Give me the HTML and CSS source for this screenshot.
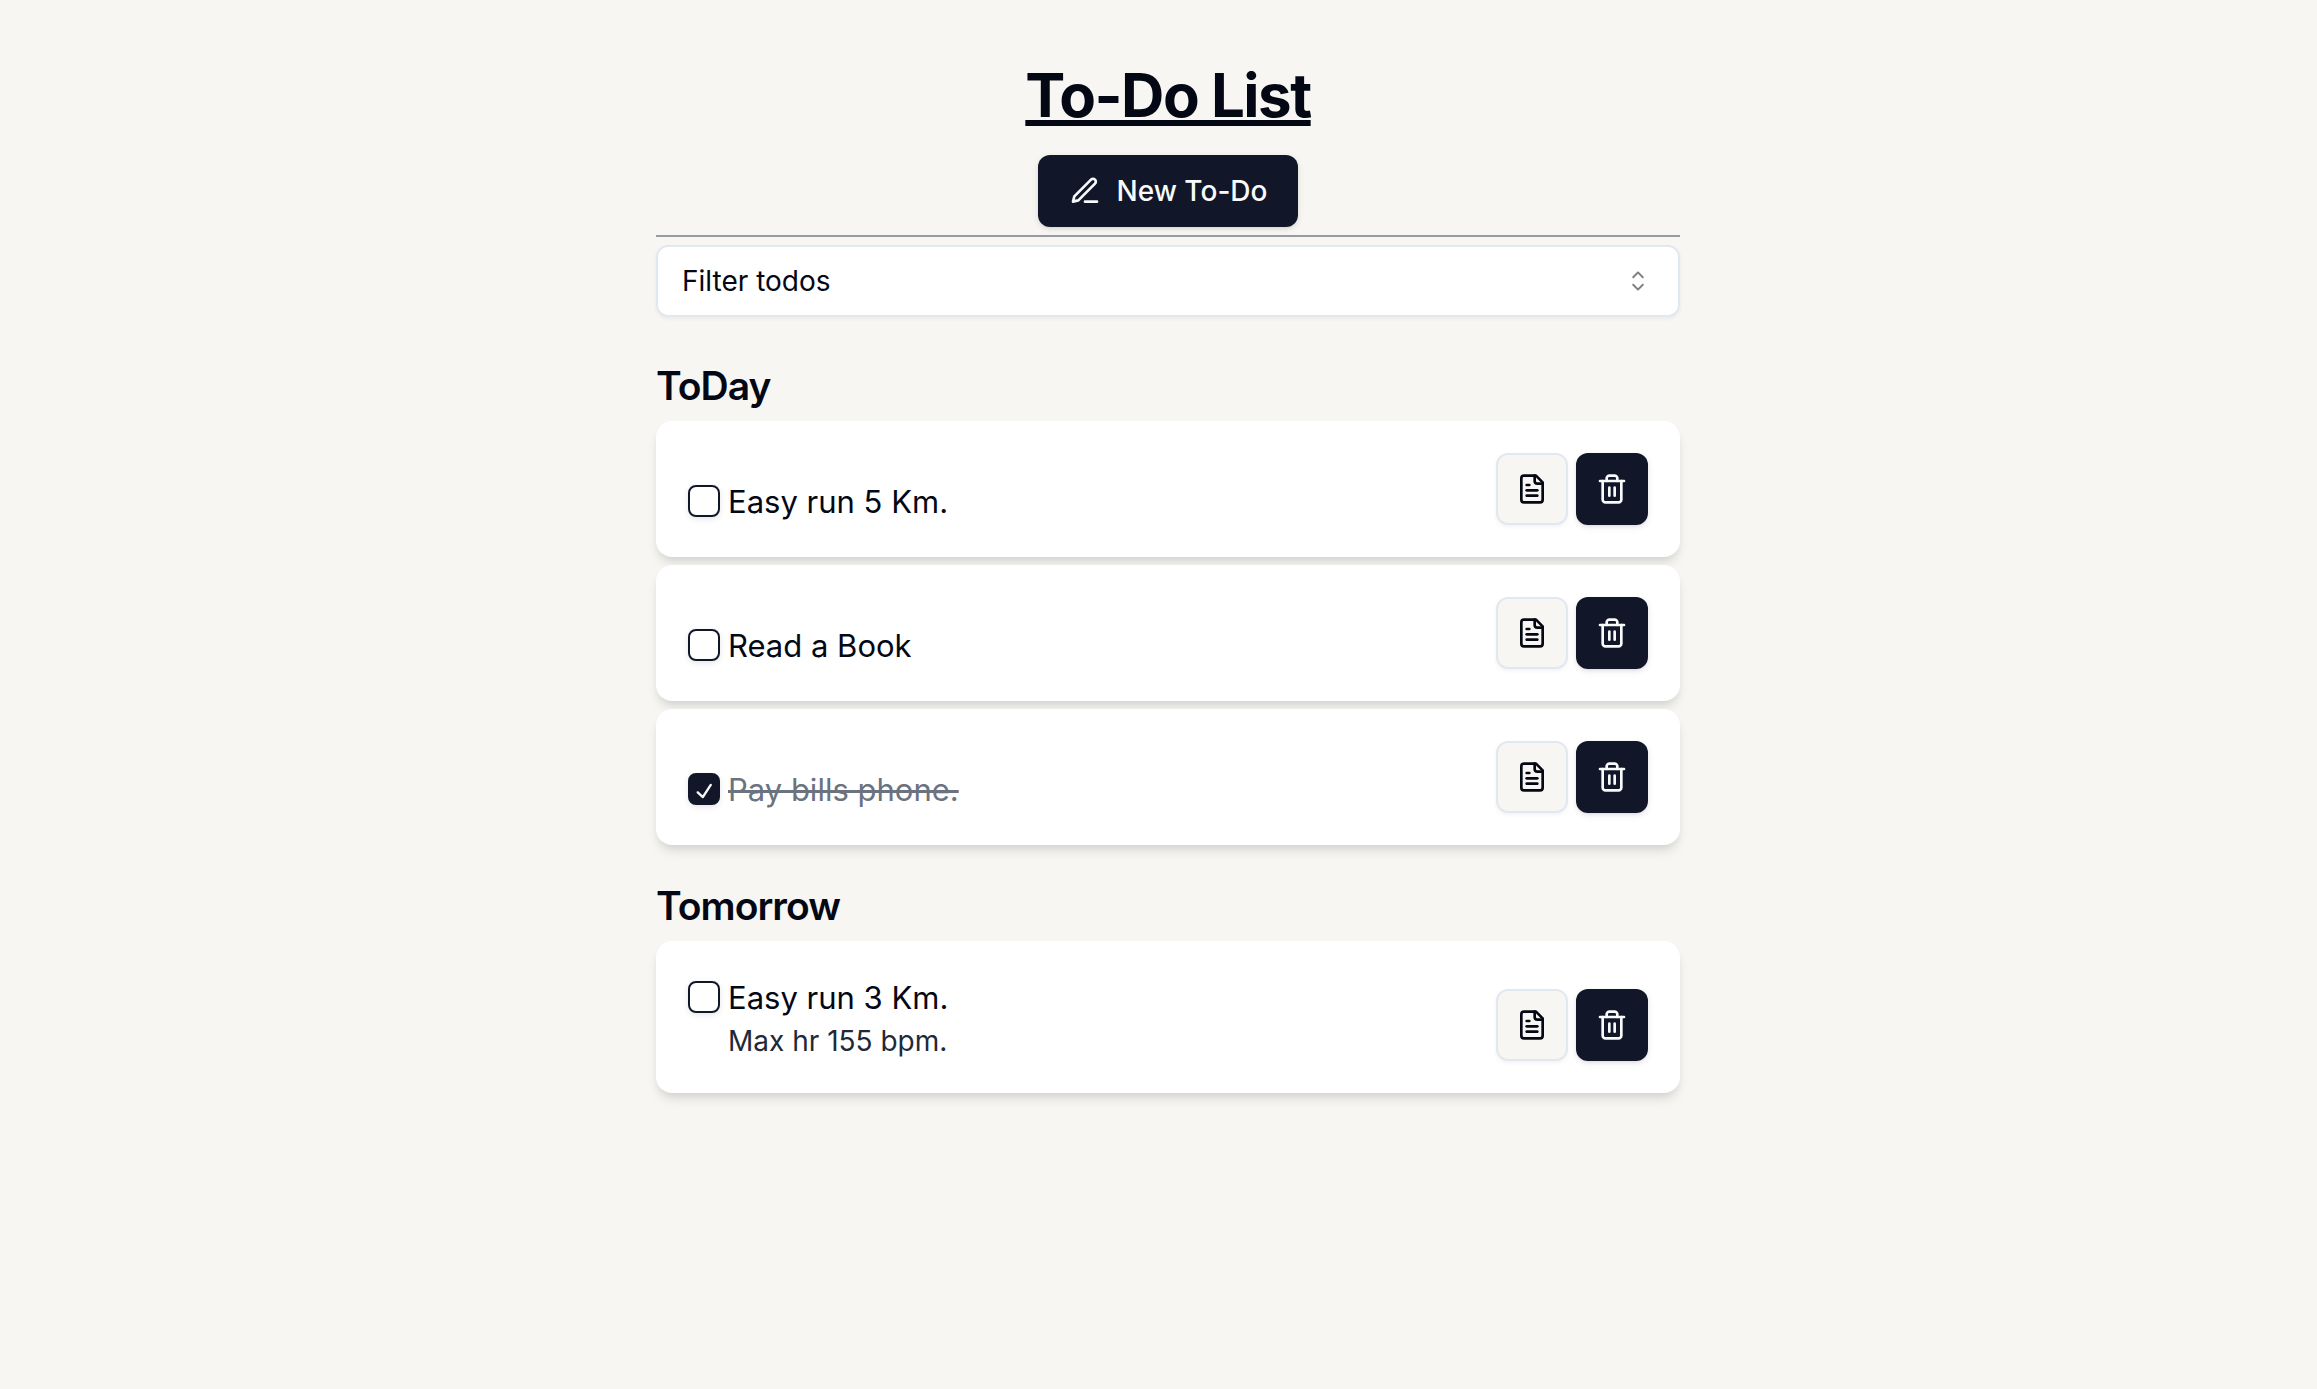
FILE: index.html
```html
<!DOCTYPE html>
<html lang="en">
<head>
  <meta charset="utf-8">
  <meta name="viewport" content="width=device-width, initial-scale=1">
  <title>To-Do List</title>
  <link rel="stylesheet" href="styles.css">
</head>
<body>
  <svg width="0" height="0" class="sprite" aria-hidden="true">
    <symbol id="icon-pen" viewBox="0 0 24 24">
      <path d="M12 20h9"/>
      <path d="M16.5 3.5a2.12 2.12 0 0 1 3 3L7 19l-4 1 1-4Z"/>
    </symbol>
    <symbol id="icon-note" viewBox="0 0 24 24">
      <path d="M15 2H6a2 2 0 0 0-2 2v16a2 2 0 0 0 2 2h12a2 2 0 0 0 2-2V7Z"/>
      <path d="M14 2v4a2 2 0 0 0 2 2h4"/>
      <path d="M10 9H8"/>
      <path d="M16 13H8"/>
      <path d="M16 17H8"/>
    </symbol>
    <symbol id="icon-trash" viewBox="0 0 24 24">
      <path d="M3 6h18"/>
      <path d="M19 6v14c0 1-1 2-2 2H7c-1 0-2-1-2-2V6"/>
      <path d="M8 6V4c0-1 1-2 2-2h4c1 0 2 1 2 2v2"/>
      <path d="M10 11v6"/>
      <path d="M14 11v6"/>
    </symbol>
  </svg>

  <main class="app">
    <header class="header">
      <h1 class="title">To-Do List</h1>
      <button type="button" class="button button-new">
        <svg class="icon" aria-hidden="true"><use href="#icon-pen"/></svg>
        New To-Do
      </button>
    </header>
    <hr class="divider">

    <div class="filter">
      <select class="filter-select" aria-label="Filter todos">
        <option>Filter todos</option>
        <option>Done</option>
        <option>Pending</option>
      </select>
      <svg class="filter-caret" viewBox="0 0 15 15" aria-hidden="true">
        <path d="M4.93179 5.43179C4.75605 5.60753 4.75605 5.89245 4.93179 6.06819C5.10753 6.24392 5.39245 6.24392 5.56819 6.06819L7.49999 4.13638L9.43179 6.06819C9.60753 6.24392 9.89245 6.24392 10.0682 6.06819C10.2439 5.89245 10.2439 5.60753 10.0682 5.43179L7.81819 3.18179C7.73379 3.0974 7.61933 3.04999 7.49999 3.04999C7.38064 3.04999 7.26618 3.0974 7.18179 3.18179L4.93179 5.43179ZM4.93179 9.56819L7.18179 11.8182C7.35753 11.9939 7.64245 11.9939 7.81819 11.8182L10.0682 9.56819C10.2439 9.39245 10.2439 9.10753 10.0682 8.93179C9.89245 8.75606 9.60753 8.75606 9.43179 8.93179L7.49999 10.8636L5.56819 8.93179C5.39245 8.75606 5.10753 8.75606 4.93179 8.93179C4.75605 9.10753 4.75605 9.39245 4.93179 9.56819Z"/>
      </svg>
    </div>

    <section class="group">
      <h2 class="group-title">ToDay</h2>
      <ul class="list">
        <li class="card">
          <div class="todo">
            <input type="checkbox" class="check" id="todo-1">
            <label class="todo-name" for="todo-1">Easy run 5 Km.</label>
          </div>
          <div class="actions">
            <button type="button" class="button button-icon button-outline" aria-label="Details"><svg class="icon" aria-hidden="true"><use href="#icon-note"/></svg></button>
            <button type="button" class="button button-icon" aria-label="Delete"><svg class="icon" aria-hidden="true"><use href="#icon-trash"/></svg></button>
          </div>
        </li>
        <li class="card">
          <div class="todo">
            <input type="checkbox" class="check" id="todo-2">
            <label class="todo-name" for="todo-2">Read a Book</label>
          </div>
          <div class="actions">
            <button type="button" class="button button-icon button-outline" aria-label="Details"><svg class="icon" aria-hidden="true"><use href="#icon-note"/></svg></button>
            <button type="button" class="button button-icon" aria-label="Delete"><svg class="icon" aria-hidden="true"><use href="#icon-trash"/></svg></button>
          </div>
        </li>
        <li class="card">
          <div class="todo">
            <input type="checkbox" class="check" id="todo-3" checked>
            <label class="todo-name" for="todo-3">Pay bills phone.</label>
          </div>
          <div class="actions">
            <button type="button" class="button button-icon button-outline" aria-label="Details"><svg class="icon" aria-hidden="true"><use href="#icon-note"/></svg></button>
            <button type="button" class="button button-icon" aria-label="Delete"><svg class="icon" aria-hidden="true"><use href="#icon-trash"/></svg></button>
          </div>
        </li>
      </ul>
    </section>

    <section class="group">
      <h2 class="group-title">Tomorrow</h2>
      <ul class="list">
        <li class="card">
          <div class="todo">
            <input type="checkbox" class="check" id="todo-4">
            <label class="todo-name" for="todo-4">Easy run 3 Km.</label>
            <p class="todo-note">Max hr 155 bpm.</p>
          </div>
          <div class="actions">
            <button type="button" class="button button-icon button-outline" aria-label="Details"><svg class="icon" aria-hidden="true"><use href="#icon-note"/></svg></button>
            <button type="button" class="button button-icon" aria-label="Delete"><svg class="icon" aria-hidden="true"><use href="#icon-trash"/></svg></button>
          </div>
        </li>
      </ul>
    </section>
  </main>
</body>
</html>
```
FILE: styles.css
```css
:root {
  --background: #f7f6f2;
  --foreground: #030814;
  --primary: #111728;
  --primary-foreground: #f8fafc;
  --border: #e2e8f0;
  --shadow: 0 2px 6px rgb(0 0 0 / 0.1), 0 2px 4px -2px rgb(0 0 0 / 0.1);
}

* {
  box-sizing: border-box;
  margin: 0;
  padding: 0;
}

body {
  min-height: 100vh;
  padding: 59px 0 59px 19px;
  background: var(--background);
  color: var(--foreground);
  font-family: Inter, "Liberation Sans", sans-serif;
  font-size: 31px;
  line-height: 48px;
}

.sprite {
  display: block;
}

.app {
  max-width: 1024px;
  margin: 0 auto;
}

.header {
  display: flex;
  flex-direction: column;
  align-items: center;
  gap: 24px;
}

.title {
  font-size: 60px;
  font-weight: 700;
  line-height: 72px;
  letter-spacing: -0.025em;
  text-decoration: underline;
  text-decoration-thickness: 6px;
  text-decoration-skip-ink: none;
  text-underline-offset: 3px;
}

.button {
  display: inline-flex;
  align-items: center;
  justify-content: center;
  height: 72px;
  border: 0;
  border-radius: 12px;
  background: var(--primary);
  color: var(--primary-foreground);
  font: 500 28px/40px Inter, "Liberation Sans", sans-serif;
  box-shadow: var(--shadow);
  cursor: pointer;
}

.button-new {
  gap: 16px;
  padding: 0 31px;
}

.button-icon {
  width: 72px;
}

.button-outline {
  border: 2px solid var(--border);
  background: var(--background);
  color: var(--foreground);
  box-shadow: 0 2px 4px rgb(0 0 0 / 0.05);
}

.icon {
  width: 32px;
  height: 32px;
  fill: none;
  stroke: currentColor;
  stroke-width: 2;
  stroke-linecap: round;
  stroke-linejoin: round;
}

.divider {
  height: 2px;
  margin: 8px 0;
  border: 0;
  background: #959aa3;
}

.filter {
  display: grid;
  align-items: center;
}

.filter-select,
.filter-caret {
  grid-area: 1 / 1;
}

.filter-select {
  width: 100%;
  height: 72px;
  padding: 0 72px 0 24px;
  appearance: none;
  border: 2px solid var(--border);
  border-radius: 12px;
  background: #fff;
  color: var(--foreground);
  font: 400 28px/40px Inter, "Liberation Sans", sans-serif;
  box-shadow: 0 2px 4px rgb(0 0 0 / 0.05);
}

.filter-caret {
  justify-self: end;
  width: 32px;
  height: 32px;
  margin-right: 26px;
  opacity: 0.5;
  pointer-events: none;
}

.group {
  margin-top: 32px;
}

.filter + .group {
  margin-top: 40px;
}

.group-title {
  margin-bottom: 6px;
  font-size: 39px;
  font-weight: 600;
  line-height: 58px;
  letter-spacing: -0.025em;
}

.list {
  display: flex;
  flex-direction: column;
  gap: 8px;
  list-style: none;
}

.card {
  display: flex;
  align-items: flex-end;
  justify-content: space-between;
  padding: 32px;
  border-radius: 16px;
  background: #fff;
  box-shadow: 0 8px 12px -2px rgb(0 0 0 / 0.1), 0 4px 8px -4px rgb(0 0 0 / 0.1);
}

.todo {
  display: grid;
  grid-template-columns: 32px 1fr;
  column-gap: 8px;
  align-items: center;
}

.todo-name {
  padding-top: 2px;
  line-height: 46px;
}

.check {
  width: 32px;
  height: 32px;
  appearance: none;
  border: 2px solid var(--primary);
  border-radius: 8px;
  box-shadow: 0 2px 6px rgb(0 0 0 / 0.1);
}

.check:checked {
  background: var(--primary) url("data:image/svg+xml,%3Csvg xmlns='http://www.w3.org/2000/svg' viewBox='0 0 15 15'%3E%3Cpath fill='%23f8fafc' d='M11.4669 3.72684C11.7558 3.91574 11.8369 4.30308 11.648 4.59198L7.39799 11.092C7.29783 11.2452 7.13556 11.3467 6.95402 11.3699C6.77247 11.3931 6.58989 11.3355 6.45446 11.2124L3.70446 8.71241C3.44905 8.48022 3.43023 8.08494 3.66242 7.82953C3.89461 7.57412 4.28989 7.55529 4.5453 7.78749L6.75292 9.79441L10.6018 3.90792C10.7907 3.61902 11.178 3.53795 11.4669 3.72684Z'/%3E%3C/svg%3E") 2px 4px / 28px 28px no-repeat border-box;
}

.check:checked + .todo-name {
  color: #6b7280;
  text-decoration: line-through;
  text-decoration-thickness: 3px;
}

.todo-note {
  grid-column: 2;
  color: #1f2937;
  font-size: 28px;
  line-height: 40px;
}

.actions {
  display: flex;
  gap: 8px;
}
```
